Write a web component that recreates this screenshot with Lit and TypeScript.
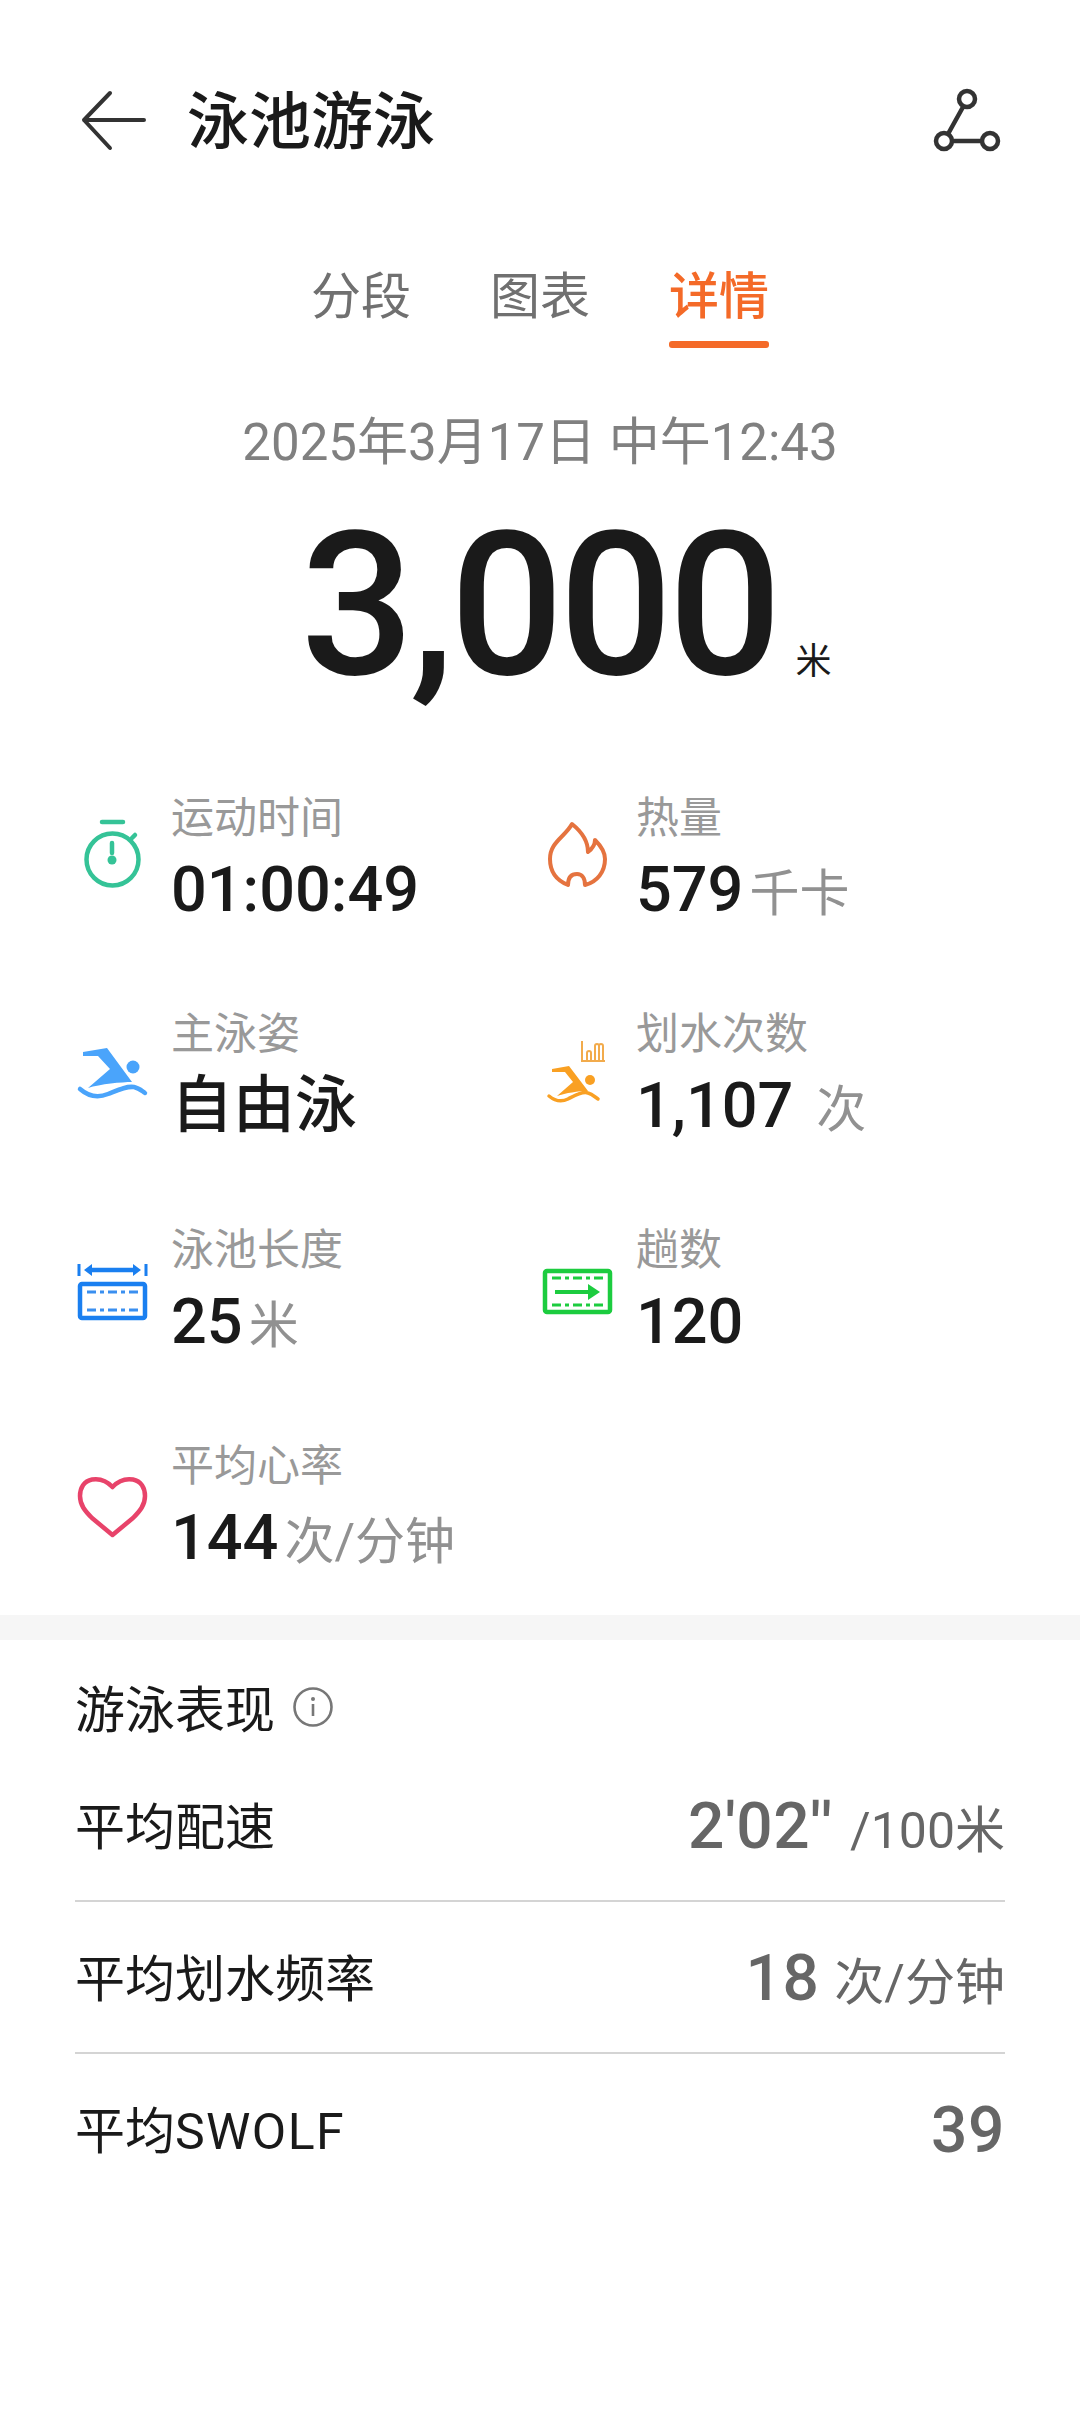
import { LitElement, html, css, svg } from "lit";
import { customElement } from "lit/decorators.js";

const swim = (c: string) => svg`<path fill="${c}" d="M83 1053 L107 1049 L132 1083 C122 1083 100 1085 88 1089 L110 1070 L98 1057 L83 1057 Z"/><circle cx="133" cy="1068" r="6.5" fill="${c}"/><path fill="none" stroke="${c}" stroke-width="4.5" stroke-linecap="round" d="M80 1090 C88 1097 98 1099 108 1095 C118 1091 126 1087 134 1088 C139 1089 142 1092 145 1094"/>`;

const icons: Record<string, any> = {
  watch: html`<svg viewBox="76 826 72 72"><circle cx="112.5" cy="862.5" r="26" fill="none" stroke="#35c397" stroke-width="4.5"/><path d="M102 825H123M132 841L135 838M112 846V856" stroke="#35c397" stroke-width="4.5" stroke-linecap="round" fill="none"/><circle cx="112" cy="863" r="4.5" fill="#35c397"/></svg>`,
  flame: html`<svg viewBox="541 826 72 72"><path fill="none" stroke="#e5733f" stroke-width="4" stroke-linejoin="round" d="M572 827C565 840 550 845 550 862C550 876 558 884 568 888C568 880 572 877 577 877C582 877 585 881 585 888C597 885 605 875 605 862C605 855 600 848 595 843C595 848 592 852 588 855C588 845 582 835 572 827Z"/></svg>`,
  swim: html`<svg viewBox="76 1040 72 72">${swim("#4aa4fb")}</svg>`,
  strokes: html`<svg viewBox="541 1040 72 72"><path fill="#f9a023" d="M552 1070L569 1067L588 1092C578 1092 566 1094 557 1097L573 1083L565 1073L552 1073Z"/><circle cx="590" cy="1081" r="5" fill="#f9a023"/><path fill="none" stroke="#f9a023" stroke-width="3.5" stroke-linecap="round" d="M549 1097C555 1102 562 1103 568 1100C574 1097 582 1092 588 1094C592 1095 595 1098 598 1100"/><path fill="none" stroke="#f2ab4c" stroke-width="2" d="M582 1042V1062H605M587 1062V1054Q587 1052 589 1052Q591 1052 591 1054V1062M595 1062V1047Q595 1045 597 1045Q599 1045 599 1047V1062M599 1062V1047Q599 1045 601 1045Q603 1045 603 1047V1062"/></svg>`,
  pool: html`<svg viewBox="76 1254 72 72"><path fill="none" stroke="#1a7ff0" stroke-width="3" d="M79 1263V1275M146 1263V1275"/><path fill="none" stroke="#1a7ff0" stroke-width="4.5" d="M88 1269H136"/><path fill="#1a7ff0" d="M84 1269L92 1263V1275ZM141 1269L133 1263V1275Z"/><rect x="80" y="1283" width="65" height="34" rx="2" fill="none" stroke="#1a7ff0" stroke-width="4.5"/><path fill="none" stroke="#3a8ff0" stroke-width="3.2" stroke-dasharray="9 4 4 4" d="M87 1291H138M87 1309H138"/></svg>`,
  lap: html`<svg viewBox="541 1256 72 72"><rect x="545" y="1272" width="65" height="41" rx="2" fill="none" stroke="#1ccc3f" stroke-width="4.5"/><path fill="none" stroke="#1ccc3f" stroke-width="3.2" stroke-dasharray="9 4 4 4" d="M552 1279H603M552 1306H603"/><path fill="none" stroke="#1ccc3f" stroke-width="4" d="M555 1293H590"/><path fill="#1ccc3f" d="M600 1293L588 1285V1301Z"/></svg>`,
  heart: html`<svg viewBox="76 1471 72 72"><path fill="none" stroke="#e8436a" stroke-width="4.5" stroke-linejoin="round" d="M112.5 1487C106 1480 98 1478.5 92 1479.5C84 1481 80 1488 80 1496C80 1505 85 1511 92 1518L112.5 1535L133 1518C140 1511 145 1505 145 1496C145 1488 141 1481 133 1479.5C127 1478.5 119 1480 112.5 1487Z"/></svg>`,
};

const metrics = [
  { icon: "watch", label: "运动时间", value: "01:00:49", unit: "" },
  { icon: "flame", label: "热量", value: "579", unit: "千卡" },
  { icon: "swim", label: "主泳姿", value: "自由泳", unit: "", cjk: true },
  { icon: "strokes", label: "划水次数", value: "1,107", unit: "次", wide: true },
  { icon: "pool", label: "泳池长度", value: "25", unit: "米" },
  { icon: "lap", label: "趟数", value: "120", unit: "" },
  { icon: "heart", label: "平均心率", value: "144", unit: "次/分钟" },
];

const rows = [
  { label: "平均配速", value: html`2'02<i class="q">''</i>`, unit: "/100米" },
  { label: "平均划水频率", value: "18", unit: "次/分钟" },
  { label: html`平均<span class="latin">SWOLF</span>`, value: "39", unit: "" },
];

@customElement("app-root")
export class AppRoot extends LitElement {
  static styles = css`
    :host { display: block; width: 1080px; height: 2420px; background: #fff; overflow: hidden;
      font-family: Roboto, "Noto Sans CJK SC", sans-serif; color: #1a1a1a; }
    svg { display: block; overflow: visible; width: 72px; height: 72px; }
    .bar { display: flex; align-items: center; height: 240px; padding: 0 76px 0 77px; }
    .bar .back { width: 72px; height: 72px; margin-right: 38px; flex: none; }
    .bar h1 { margin: 6px 0 0; font-size: 62px; font-weight: 500; line-height: 80px; flex: 1; }
    .bar .share { width: 72px; height: 72px; }
    .tabs { display: flex; justify-content: center; gap: 79px; height: 108px; margin-top: 22px; }
    .tab { font-size: 50px; line-height: 70px; color: #707070; position: relative; }
    .tab.on { color: #f46a28; font-weight: 500; }
    .tab.on::after { content: ""; position: absolute; left: 0; right: 0; top: 79px; height: 7px; border-radius: 3px; background: #f46a28; }
    .date { text-align: center; font-size: 51px; line-height: 64px; color: #808080; margin-top: 41px; }
    .total { text-align: center; margin-top: 26px; height: 219px; padding-left: 52px; white-space: nowrap; line-height: 210px; }
    .total b { font-size: 200px; font-weight: 500; letter-spacing: -4.5px; color: #1a1a1a; }
    .total span { font-size: 36px; margin-left: 18px; }
    .grid { display: grid; grid-template-columns: 465px 1fr; row-gap: 76px; padding-left: 76px; margin-top: 69px; }
    .item { display: flex; align-items: center; height: 140px; }
    .item .ic { width: 72px; height: 72px; margin-right: 23px; flex: none; }
    .lab { font-size: 43px; line-height: 60px; color: #999; }
    .val { display: flex; align-items: baseline; height: 80px; line-height: 80px; font-size: 63px; font-weight: 500; white-space: nowrap; margin-top: 2px; }
    .val.cjk { font-size: 62px; }
    .val span { font-size: 50px; font-weight: 400; color: #919191; margin-left: 6px; }
    .val span.wide { margin-left: 23px; }
    .band { height: 25px; background: #f6f6f6; margin-top: 38px; }
    .perf { padding: 0 75px; }
    .perf h2 { margin: 31px 0 0; display: flex; align-items: center; height: 70px; font-size: 50px; font-weight: 400; gap: 17px; }
    .perf h2 svg { width: 42px; height: 42px; margin-top: 2px; }
    .rows { margin-top: 9px; }
    .row { display: flex; align-items: center; justify-content: space-between; height: 150px; font-size: 50px; border-bottom: 2px solid #d4d4d4; }
    .row:last-child { border-bottom: 0; }
    .row > div:first-child { padding-bottom: 4px; }
    .row .latin { letter-spacing: 1.4px; font-size: 50px; }
    .row .r { display: flex; align-items: baseline; color: #666; font-size: 64px; font-weight: 500; letter-spacing: 0.6px; padding-top: 3px; }
    .row .r span { font-size: 50px; font-weight: 400; margin-left: 15px; letter-spacing: 0; }
    .row .r .q { font-style: normal; letter-spacing: 3px; }
  `;

  render() {
    return html`
      <div class="bar">
        <svg class="back" viewBox="76 84 72 72"><path fill="none" stroke="#333" stroke-width="4" stroke-linecap="round" stroke-linejoin="round" d="M109 93L83 120L109 148M83 120H143"/></svg>
        <h1>泳池游泳</h1>
        <svg class="share" viewBox="932 84 72 72"><path fill="none" stroke="#333" stroke-width="4.5" d="M963 107L948 134M952 141H982"/><circle cx="967" cy="99" r="8" fill="none" stroke="#333" stroke-width="4.5"/><circle cx="944" cy="141" r="8" fill="none" stroke="#333" stroke-width="4.5"/><circle cx="990" cy="141" r="8" fill="none" stroke="#333" stroke-width="4.5"/></svg>
      </div>
      <div class="tabs">
        <div class="tab">分段</div><div class="tab">图表</div><div class="tab on">详情</div>
      </div>
      <div class="date">2025年3月17日 中午12:43</div>
      <div class="total"><b>3,000</b><span>米</span></div>
      <div class="grid">
        ${metrics.map((m) => html`<div class="item">
          <div class="ic">${icons[m.icon]}</div>
          <div><div class="lab">${m.label}</div>
          <div class="val ${m.cjk ? "cjk" : ""}">${m.value}${m.unit ? html`<span class="${m.wide ? "wide" : ""}">${m.unit}</span>` : ""}</div></div>
        </div>`)}
      </div>
      <div class="band"></div>
      <div class="perf">
        <h2>游泳表现
          <svg viewBox="0 0 42 42"><circle cx="21" cy="21" r="18.5" fill="none" stroke="#777" stroke-width="2.6"/><circle cx="21" cy="13" r="2" fill="#777"/><path d="M21 18V30" stroke="#777" stroke-width="2.6"/></svg>
        </h2>
        <div class="rows">
          ${rows.map((r) => html`<div class="row"><div>${r.label}</div><div class="r">${r.value}${r.unit ? html`<span>${r.unit}</span>` : ""}</div></div>`)}
        </div>
      </div>
    `;
  }
}
